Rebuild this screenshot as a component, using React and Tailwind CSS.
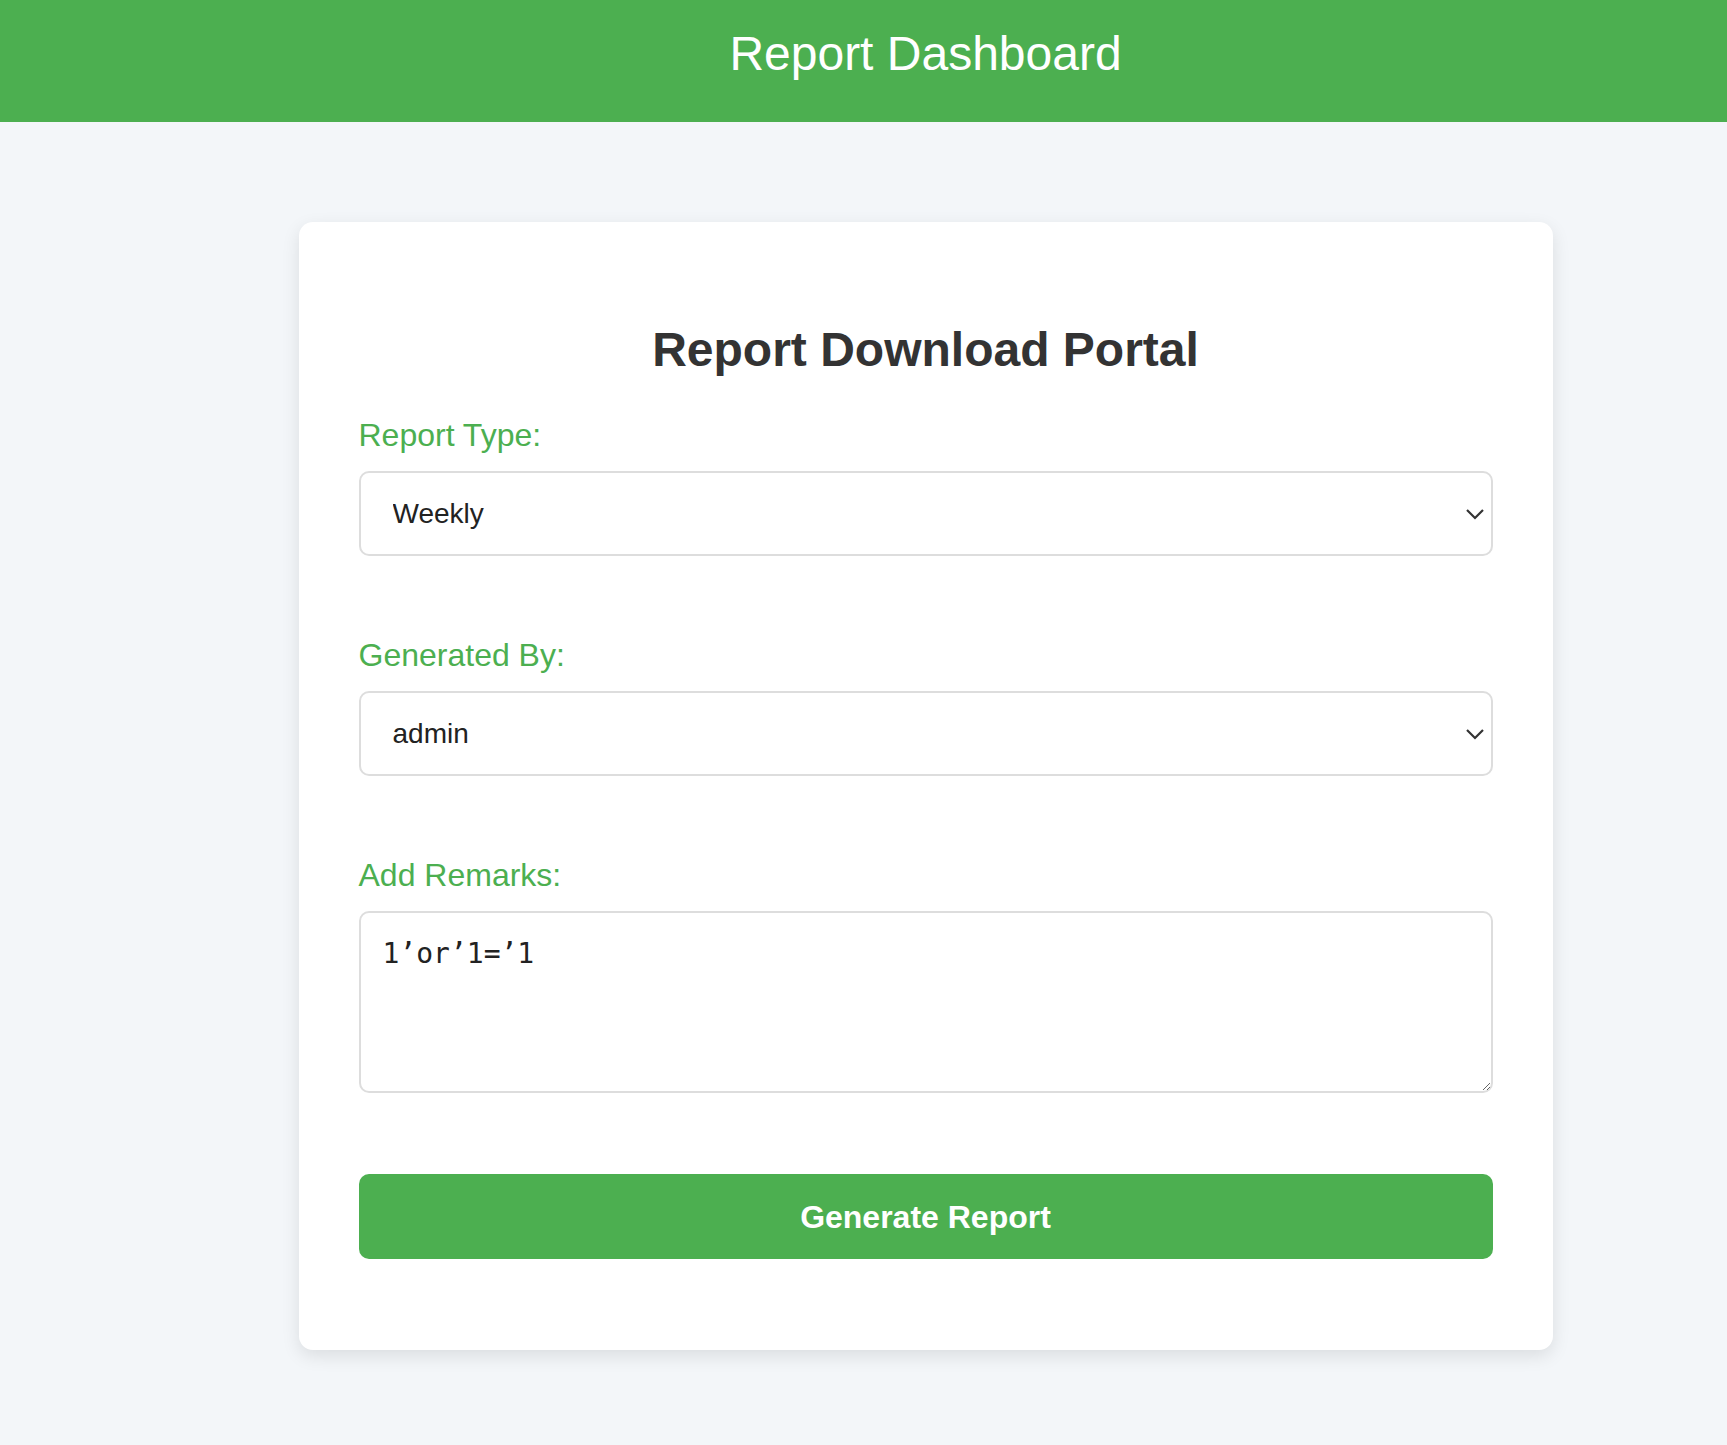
import { useState } from 'react';

const labelCls = 'block text-[32px] leading-[37px] text-[#4caf50]';
const fieldCls =
  'w-full h-[85px] appearance-none rounded-[10px] border-2 border-[#dddddd] bg-white pl-[32px] pr-[48px] text-[28px] text-[#222] outline-none';

// Chevron for the custom select
const Chevron = () => (
  <svg
    className="pointer-events-none absolute right-[8px] top-1/2 -translate-y-1/2"
    width="20"
    height="12"
    viewBox="0 0 20 12"
    fill="none"
  >
    <path d="M2 2 L10 10 L18 2" stroke="#333" strokeWidth="2.2" />
  </svg>
);

const SelectField = ({ value, onChange, options }) => (
  <div className="relative mt-[17px]">
    <select className={fieldCls} value={value} onChange={(e) => onChange(e.target.value)}>
      {options.map((o) => (
        <option key={o} value={o}>
          {o}
        </option>
      ))}
    </select>
    <Chevron />
  </div>
);

export default function App() {
  const [type, setType] = useState('Weekly');
  const [user, setUser] = useState('admin');
  const [remarks, setRemarks] = useState('1’or’1=’1');

  return (
    <div className="min-h-screen bg-[#f3f6f9] font-['Liberation_Sans',Arial,sans-serif]">
      {/* Header */}
      <header className="h-[122px] bg-[#4caf50] pt-[26px] pl-[124px]">
        <h1 className="text-center text-[48px] leading-[55px] font-normal text-white">Report Dashboard</h1>
      </header>

      {/* Main */}
      <main className="pt-[100px] pb-[95px] pl-[124px]">
        <div className="mx-auto w-[1254px] rounded-[14px] bg-white px-[60px] pt-[100px] pb-[91px] shadow-[0_6px_18px_rgba(0,0,0,0.1)]">
          <h2 className="text-center text-[48px] leading-[55px] font-bold text-[#333]">Report Download Portal</h2>

          <label className={`${labelCls} mt-[40px]`}>Report Type:</label>
          <SelectField value={type} onChange={setType} options={['Daily', 'Weekly', 'Monthly']} />

          <label className={`${labelCls} mt-[81px]`}>Generated By:</label>
          <SelectField value={user} onChange={setUser} options={['admin', 'user']} />

          <label className={`${labelCls} mt-[81px]`}>Add Remarks:</label>
          <textarea
            className="mt-[17px] block h-[182px] w-full rounded-[10px] border-2 border-[#dddddd] bg-white px-[22px] pt-[25px] font-['DejaVu_Sans_Mono',monospace] text-[28px] leading-[32px] text-[#222] outline-none"
            value={remarks}
            onChange={(e) => setRemarks(e.target.value)}
          />

          <button className="mt-[81px] block h-[85px] w-full rounded-[10px] bg-[#4caf50] text-[32px] font-bold text-white">
            Generate Report
          </button>
        </div>
      </main>
    </div>
  );
}
